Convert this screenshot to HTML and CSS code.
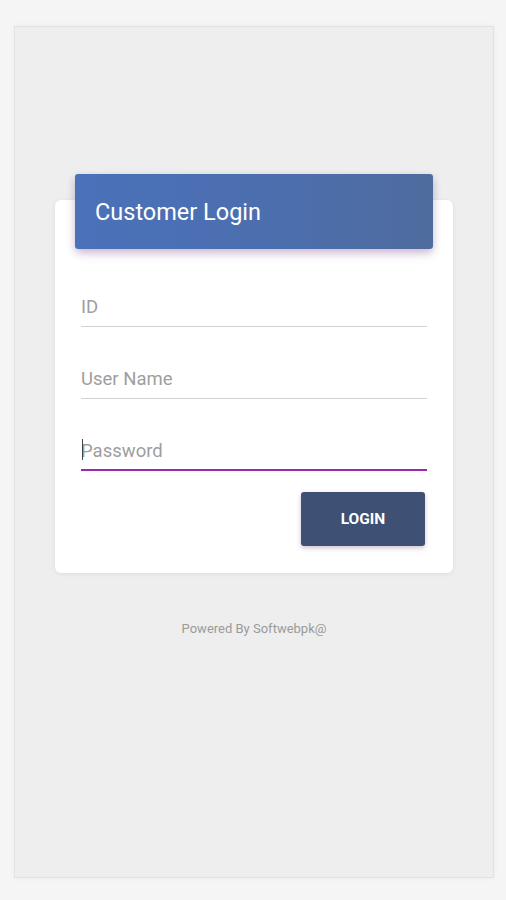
FILE: index.html
```html
<!DOCTYPE html>
<html>
<head>
<meta charset="utf-8">
<link rel="stylesheet" href="styles.css">
</head>
<body>
<div class="frame">
  <div class="card">
    <div class="card-header">Customer Login</div>
    <form class="form">
      <div class="field"><input class="input" type="text" placeholder="ID"></div>
      <div class="field"><input class="input" type="text" placeholder="User Name"></div>
      <div class="field field-active"><input class="input" type="password" placeholder="Password"></div>
      <div class="actions"><button class="btn" type="button">LOGIN</button></div>
    </form>
  </div>
  <div class="footer">Powered By Softwebpk@</div>
</div>
</body>
</html>
```
FILE: styles.css
```css
html, body {
  margin: 0;
  padding: 0;
}
body {
  background: #f5f5f5;
  font-family: Roboto, "Liberation Sans", sans-serif;
  padding: 26px 0 0 14px;
  height: 900px;
  box-sizing: border-box;
  overflow: hidden;
}
.frame {
  width: 480px;
  height: 852px;
  box-sizing: border-box;
  border: 1px solid #e2e2e2;
  background: #eeeeee;
  box-shadow: 0 0 6px rgba(0,0,0,0.04);
  padding-top: 147px;
}
.card {
  display: flow-root;
  margin-left: 40px;
  width: 398px;
  background: #fff;
  border-radius: 6px;
  box-shadow: 0 1px 4px rgba(0,0,0,0.08);
  margin-top: 26px;
  padding-bottom: 27px;
}
.card-header {
  margin: -26px 20px 0;
  height: 75px;
  box-sizing: border-box;
  padding-left: 20px;
  display: flex;
  align-items: center;
  background: linear-gradient(90deg, #4a71ba 0%, #4c6eae 55%, #4f6c9f 100%);
  color: #fff;
  font-size: 23.5px;
  border-radius: 3px;
  box-shadow: 0 6px 12px -2px rgba(156, 39, 176, 0.18), 0 3px 8px rgba(0,0,0,0.18);
}
.form {
  display: flex;
  flex-direction: column;
  padding: 0 26px;
  margin: 0;
}
.field {
  position: relative;
  height: 44px;
  margin-top: 28px;
  border-bottom: 1px solid #d2d2d2;
  box-sizing: border-box;
}
.field:first-child {
  margin-top: 34px;
}
.field-active {
  border-bottom: 2px solid #9c27b0;
}
.field-active::before {
  content: "";
  position: absolute;
  left: 1px;
  top: 12px;
  width: 1px;
  height: 21px;
  background: #444;
}
.input {
  display: block;
  width: 100%;
  height: 100%;
  box-sizing: border-box;
  border: 0;
  outline: 0;
  background: transparent;
  padding: 5px 0 0 0;
  font-family: Roboto, "Liberation Sans", sans-serif;
  font-size: 18.5px;
  color: #333;
}
.input::placeholder {
  color: #9e9e9e;
}
.actions {
  display: flex;
  justify-content: flex-end;
  margin-top: 21px;
  padding-right: 2px;
}
.btn {
  width: 124px;
  height: 54px;
  border: 0;
  border-radius: 3px;
  background: #3e5074;
  color: #fff;
  font-family: Roboto, "Liberation Sans", sans-serif;
  font-weight: bold;
  font-size: 15.5px;
  box-shadow: 0 2px 4px rgba(0,0,0,0.15), 0 2px 6px rgba(156,39,176,0.12);
  padding: 0;
}
.footer {
  margin-top: 48px;
  text-align: center;
  font-size: 13px;
  color: #9a9a9a;
}
```
